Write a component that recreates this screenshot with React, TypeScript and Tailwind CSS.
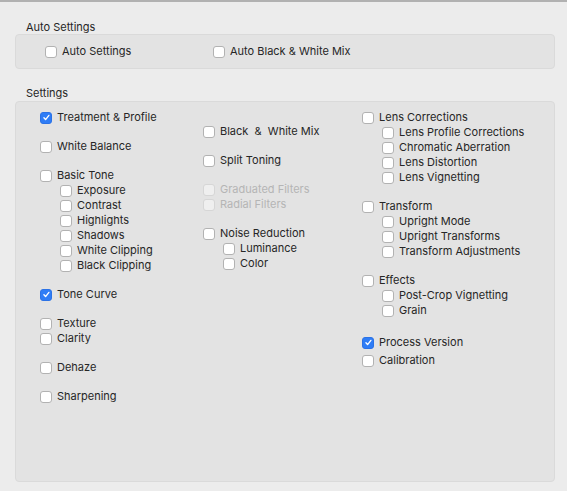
import React from 'react'

interface Item {
  label: string
  sub?: boolean
  checked?: boolean
  disabled?: boolean
  gap?: string
}

const col1: Item[] = [
  { label: 'Treatment & Profile', checked: true },
  { label: 'White Balance', gap: 'mt-[14px]' },
  { label: 'Basic Tone', gap: 'mt-[14px]' },
  { label: 'Exposure', sub: true },
  { label: 'Contrast', sub: true },
  { label: 'Highlights', sub: true },
  { label: 'Shadows', sub: true },
  { label: 'White Clipping', sub: true },
  { label: 'Black Clipping', sub: true },
  { label: 'Tone Curve', checked: true, gap: 'mt-[14px]' },
  { label: 'Texture', gap: 'mt-[14px]' },
  { label: 'Clarity' },
  { label: 'Dehaze', gap: 'mt-[14px]' },
  { label: 'Sharpening', gap: 'mt-[14px]' },
]

const col2: Item[] = [
  { label: 'Black \u00a0& \u00a0White Mix', gap: 'mt-[14px]' },
  { label: 'Split Toning', gap: 'mt-[14px]' },
  { label: 'Graduated Filters', disabled: true, gap: 'mt-[14px]' },
  { label: 'Radial Filters', disabled: true },
  { label: 'Noise Reduction', gap: 'mt-[14px]' },
  { label: 'Luminance', sub: true },
  { label: 'Color', sub: true },
]

const col3: Item[] = [
  { label: 'Lens Corrections' },
  { label: 'Lens Profile Corrections', sub: true },
  { label: 'Chromatic Aberration', sub: true },
  { label: 'Lens Distortion', sub: true },
  { label: 'Lens Vignetting', sub: true },
  { label: 'Transform', gap: 'mt-[14px]' },
  { label: 'Upright Mode', sub: true },
  { label: 'Upright Transforms', sub: true },
  { label: 'Transform Adjustments', sub: true },
  { label: 'Effects', gap: 'mt-[14px]' },
  { label: 'Post-Crop Vignetting', sub: true },
  { label: 'Grain', sub: true },
  { label: 'Process Version', checked: true, gap: 'mt-[17px]' },
  { label: 'Calibration', gap: 'mt-[3px]' },
]

function Checkbox({ checked, disabled }: { checked?: boolean; disabled?: boolean }) {
  if (checked) {
    return (
      <span className="w-[12px] h-[12px] rounded-[3px] bg-[#2f7df6] border border-[#2b72e6] flex items-center justify-center shrink-0">
        <svg viewBox="0 0 12 12" className="w-[9px] h-[9px]" fill="none" stroke="white" strokeWidth={1.8} strokeLinecap="round" strokeLinejoin="round">
          <path d="M2.6 6.4l2.2 2.4 4.4-5.6" />
        </svg>
      </span>
    )
  }
  return (
    <span
      className={`w-[12px] h-[12px] rounded-[3px] border shrink-0 ${
        disabled ? 'bg-[#efefef] border-[#d6d6d6]' : 'bg-white border-[#b2b2b2]'
      }`}
    />
  )
}

function Row({ item }: { item: Item }) {
  return (
    <div className={`h-[15px] flex items-center gap-[5px] ${item.sub ? 'pl-[20px]' : ''} ${item.gap ?? ''}`}>
      <Checkbox checked={item.checked} disabled={item.disabled} />
      <span className={`whitespace-nowrap ${item.disabled ? 'text-[#b5b5b5]' : 'text-[#262626]'}`}>{item.label}</span>
    </div>
  )
}

export default function App() {
  return (
    <div
      className="w-[567px] h-[491px] bg-[#ececec] border-t-2 border-[#b1b1b1] text-[11px] leading-[15px] overflow-hidden"
      style={{ fontFamily: 'Inter, "Liberation Sans", sans-serif' }}
    >
      <div className="pl-[15px] pr-[12px]">
        {/* Auto Settings */}
        <div className="mt-[18px] h-[14px] leading-[14px] pl-[11px] text-[#262626]">Auto Settings</div>
        <div className="h-[35px] rounded-[4px] bg-[#e3e3e3] border border-[#dadada] flex items-center">
          <div className="w-[197px] pl-[29px]">
            <Row item={{ label: 'Auto Settings' }} />
          </div>
          <Row item={{ label: 'Auto Black & White Mix' }} />
        </div>

        {/* Settings */}
        <div className="mt-[17px] h-[14px] leading-[14px] pl-[11px] text-[#262626]">Settings</div>
        <div className="mt-px h-[381px] rounded-[4px] bg-[#e3e3e3] border border-[#dadada] pt-[8px] pl-[24px] flex">
          <div className="w-[163px] flex flex-col">
            {col1.map(i => <Row key={i.label} item={i} />)}
          </div>
          <div className="w-[159px] flex flex-col">
            {col2.map(i => <Row key={i.label} item={i} />)}
          </div>
          <div className="flex flex-col">
            {col3.map(i => <Row key={i.label} item={i} />)}
          </div>
        </div>
      </div>
    </div>
  )
}
